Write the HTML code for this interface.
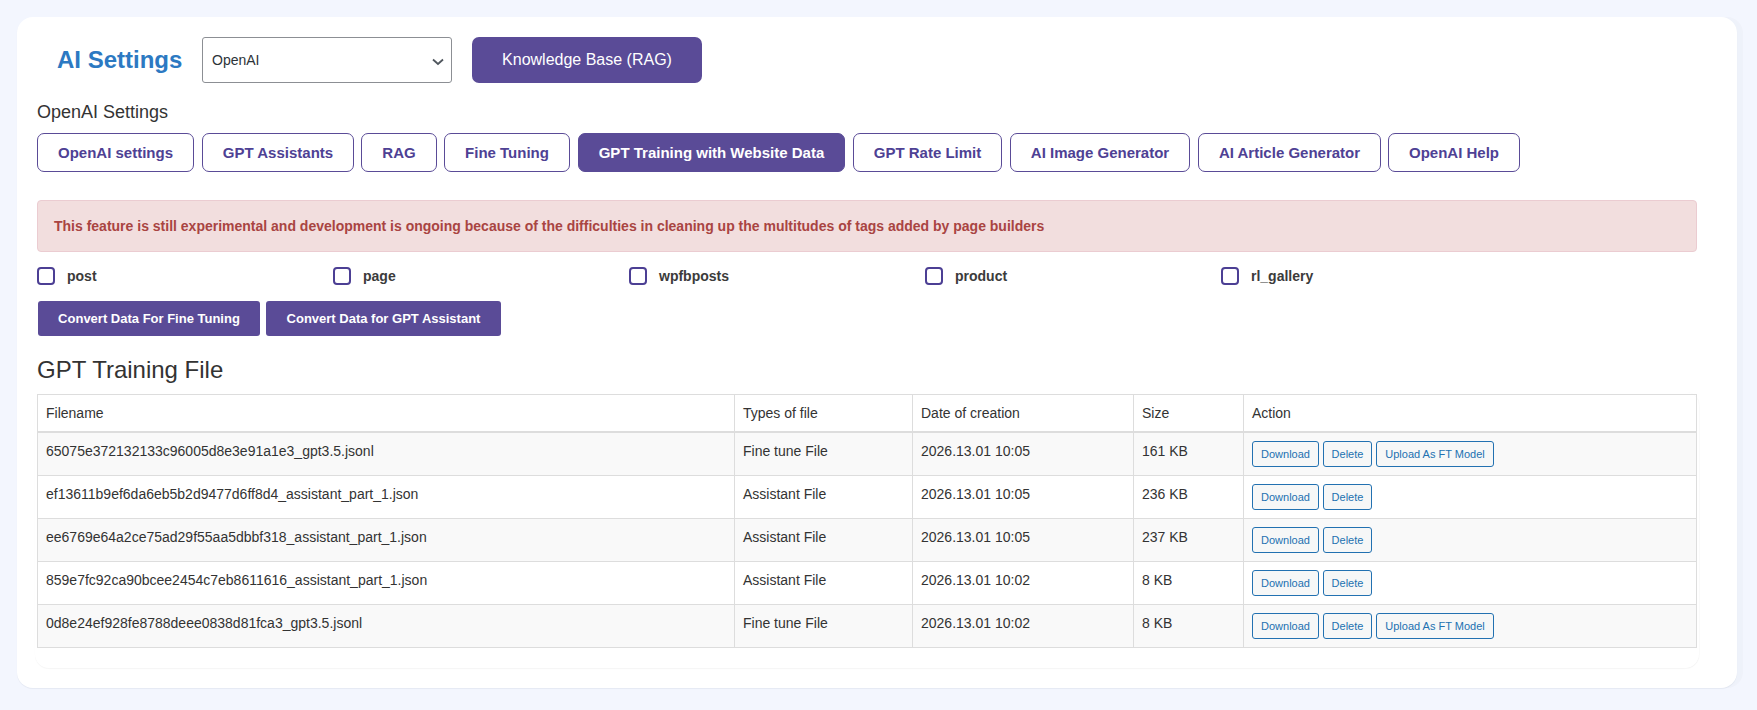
<!DOCTYPE html>
<html>
<head>
<meta charset="utf-8">
<style>
* { box-sizing: border-box; }
html, body { margin: 0; padding: 0; }
body { width: 1757px; height: 710px; background: #f3f6fe; font-family: "Liberation Sans", sans-serif; color: #333; position: relative; overflow: hidden; }
.card { position: absolute; left: 17px; top: 17px; width: 1720px; height: 671px; background: #fff; border-radius: 16px; box-shadow: 0 1px 1px rgba(20,30,60,0.06), 6px 0 1px rgba(20,30,60,0.018); }
.inner { position: absolute; left: 35px; top: 392px; width: 1664px; height: 276px; border-radius: 14px; box-shadow: 0 1px 1px rgba(0,0,0,0.04), 1px 0 1px rgba(0,0,0,0.02); background: #fff; }
.abs { position: absolute; }
.title { left: 57px; top: 45px; font-size: 24px; font-weight: bold; color: #2c79c2; line-height: 30px; white-space: nowrap; }
.select { left: 202px; top: 37px; width: 250px; height: 46px; border: 1px solid #8c8f94; border-radius: 3px; background: #fff; }
.select span { position: absolute; left: 9px; top: 14px; font-size: 14px; line-height: 16px; color: #2c3338; }
.select svg { position: absolute; left: 229px; top: 20px; }
.kb { left: 472px; top: 37px; width: 230px; height: 46px; background: #5a4b97; border-radius: 7px; color: #fff; font-size: 16px; line-height: 46px; text-align: center; }
.h-openai { left: 37px; top: 101px; font-size: 18px; line-height: 22px; color: #333; }
.tab { position: absolute; top: 133px; height: 39px; border: 1px solid #5a4b97; border-radius: 7px; color: #4e4194; font-weight: bold; font-size: 15px; line-height: 37px; text-align: center; background: #fff; white-space: nowrap; }
.tab.active { background: #5a4b97; color: #fff; }
.alert { left: 37px; top: 200px; width: 1660px; height: 52px; background: #f2dede; border: 1px solid #ebccd1; border-radius: 4px; color: #a94442; font-weight: bold; font-size: 14px; line-height: 50px; padding-left: 16px; white-space: nowrap; }
.cb { position: absolute; top: 267px; height: 18px; }
.cb i { position: absolute; left: 0; top: 0; width: 18px; height: 18px; border: 2px solid #4c3f94; border-radius: 4px; }
.cb b { position: absolute; left: 30px; top: 1px; font-size: 14px; line-height: 16px; color: #3b3b3b; white-space: nowrap; }
.conv { position: absolute; top: 301px; height: 35px; background: #5a4b97; border-radius: 3px; color: #fff; font-weight: bold; font-size: 13px; line-height: 34px; padding-top: 1px; text-align: center; white-space: nowrap; }
.h-file { left: 37px; top: 356px; font-size: 24px; line-height: 28px; color: #333; white-space: nowrap; }
table { position: absolute; left: 37px; top: 394px; width: 1660px; border-collapse: collapse; font-size: 14px; color: #333; }
td, th { border: 1px solid #ddd; padding: 0 8px; text-align: left; font-weight: normal; vertical-align: top; }
th { height: 36px; line-height: 36px; border-bottom: 2px solid #ddd; }
td { height: 43px; padding-top: 10px; line-height: 16px; }
tr.odd td { background: #f9f9f9; }
.btn { display: inline-block; height: 26px; border: 1px solid #2271b1; border-radius: 3px; background: #f6f7f7; color: #2271b1; font-size: 11px; line-height: 24px; padding: 0; text-align: center; margin-right: 4px; vertical-align: top; }
td.act { padding-top: 8px; }
</style>
</head>
<body>
<div class="card"></div>
<div class="abs title">AI Settings</div>
<div class="abs select"><span>OpenAI</span><svg width="12" height="8" viewBox="0 0 12 8"><path d="M1 1.5 L6 6 L11 1.5" stroke="#50575e" stroke-width="1.8" fill="none"/></svg></div>
<div class="abs kb">Knowledge Base (RAG)</div>
<div class="abs h-openai">OpenAI Settings</div>

<div class="tab" style="left:37px;width:157px">OpenAI settings</div>
<div class="tab" style="left:202px;width:152px">GPT Assistants</div>
<div class="tab" style="left:361px;width:76px">RAG</div>
<div class="tab" style="left:444px;width:126px">Fine Tuning</div>
<div class="tab active" style="left:578px;width:267px">GPT Training with Website Data</div>
<div class="tab" style="left:853px;width:149px">GPT Rate Limit</div>
<div class="tab" style="left:1010px;width:180px">AI Image Generator</div>
<div class="tab" style="left:1198px;width:183px">AI Article Generator</div>
<div class="tab" style="left:1388px;width:132px">OpenAI Help</div>

<div class="abs alert">This feature is still experimental and development is ongoing because of the difficulties in cleaning up the multitudes of tags added by page builders</div>

<div class="cb" style="left:37px"><i></i><b>post</b></div>
<div class="cb" style="left:333px"><i></i><b>page</b></div>
<div class="cb" style="left:629px"><i></i><b>wpfbposts</b></div>
<div class="cb" style="left:925px"><i></i><b>product</b></div>
<div class="cb" style="left:1221px"><i></i><b>rl_gallery</b></div>

<div class="conv" style="left:38px;width:222px">Convert Data For Fine Tuning</div>
<div class="conv" style="left:266px;width:235px">Convert Data for GPT Assistant</div>

<div class="inner"></div>
<div class="abs h-file">GPT Training File</div>

<table>
<colgroup><col style="width:697px"><col style="width:178px"><col style="width:221px"><col style="width:110px"><col></colgroup>
<tr><th>Filename</th><th>Types of file</th><th>Date of creation</th><th>Size</th><th>Action</th></tr>
<tr class="odd"><td>65075e372132133c96005d8e3e91a1e3_gpt3.5.jsonl</td><td>Fine tune File</td><td>2026.13.01 10:05</td><td>161 KB</td><td class="act"><span class="btn" style="width:67px">Download</span><span class="btn" style="width:49px">Delete</span><span class="btn" style="width:118px">Upload As FT Model</span></td></tr>
<tr><td>ef13611b9ef6da6eb5b2d9477d6ff8d4_assistant_part_1.json</td><td>Assistant File</td><td>2026.13.01 10:05</td><td>236 KB</td><td class="act"><span class="btn" style="width:67px">Download</span><span class="btn" style="width:49px">Delete</span></td></tr>
<tr class="odd"><td>ee6769e64a2ce75ad29f55aa5dbbf318_assistant_part_1.json</td><td>Assistant File</td><td>2026.13.01 10:05</td><td>237 KB</td><td class="act"><span class="btn" style="width:67px">Download</span><span class="btn" style="width:49px">Delete</span></td></tr>
<tr><td>859e7fc92ca90bcee2454c7eb8611616_assistant_part_1.json</td><td>Assistant File</td><td>2026.13.01 10:02</td><td>8 KB</td><td class="act"><span class="btn" style="width:67px">Download</span><span class="btn" style="width:49px">Delete</span></td></tr>
<tr class="odd"><td>0d8e24ef928fe8788deee0838d81fca3_gpt3.5.jsonl</td><td>Fine tune File</td><td>2026.13.01 10:02</td><td>8 KB</td><td class="act"><span class="btn" style="width:67px">Download</span><span class="btn" style="width:49px">Delete</span><span class="btn" style="width:118px">Upload As FT Model</span></td></tr>
</table>
</body>
</html>
